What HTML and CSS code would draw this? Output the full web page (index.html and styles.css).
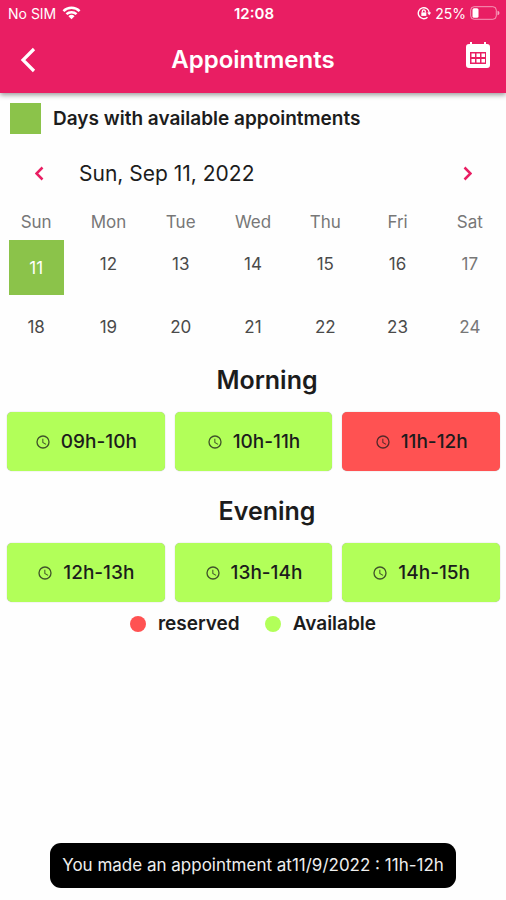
FILE: index.html
```html
<!DOCTYPE html>
<html lang="en">
<head>
<meta charset="utf-8">
<meta name="viewport" content="width=device-width, initial-scale=1">
<title>Appointments</title>
<link rel="stylesheet" href="styles.css">
</head>
<body>
<svg class="sprite" aria-hidden="true">
  <symbol id="clock" viewBox="0 0 24 24"><path fill="currentColor" d="M12 2a10 10 0 1 0 0 20 10 10 0 0 0 0-20zm0 18a8 8 0 1 1 0-16 8 8 0 0 1 0 16zm.5-13H11v6l5.200 3.200.8-1.300-4.500-2.700z"/></symbol>
</svg>
<header class="top">
  <div class="status">
    <div class="status-side">
      <span>No SIM</span>
      <svg class="wifi" viewBox="0 0 20 14" fill="none" stroke="currentColor" stroke-width="2.600"><path d="M1.500 5a12 12 0 0 1 17 0M4.700 8.300a7.500 7.500 0 0 1 10.600 0"/><path d="M10 13.500 6.800 10.300a4.500 4.500 0 0 1 6.400 0z" fill="currentColor" stroke="none"/></svg>
    </div>
    <span class="time">12:08</span>
    <div class="status-side status-end">
      <svg class="lock" viewBox="0 0 14 14" fill="none" stroke="currentColor"><path stroke-width="1.400" d="M10.500 11.300A5.500 5.500 0 1 1 12.300 7"/><path d="M10.200 6.400h4l-2 2.800z" fill="currentColor" stroke="none"/><path d="M4.300 6.400h5v3.500h-5z" fill="currentColor" stroke="none"/><path stroke-width="1.200" d="M5.300 6.500V5.300a1.500 1.500 0 0 1 3 0v1.200"/></svg>
      <span>25%</span>
      <svg class="battery" viewBox="0 0 30 14"><rect x=".7" y=".7" width="25.600" height="12.600" rx="3.500" fill="none" stroke="currentColor" stroke-opacity=".55"/><rect x="2.500" y="2.300" width="6" height="9.400" rx="1.500" fill="currentColor"/><path d="M27.500 4.700q2 .6 2 2.300t-2 2.300z" fill="currentColor" fill-opacity=".6"/></svg>
    </div>
  </div>
  <div class="bar">
    <button class="icon-button" aria-label="Back"><svg class="back" viewBox="0 0 16 26" fill="none" stroke="currentColor" stroke-width="3.200"><path d="M14 2 3 13l11 11"/></svg></button>
    <h1>Appointments</h1>
    <button class="icon-button" aria-label="Open calendar"><svg class="calendar-icon" viewBox="0 0 24 27"><path fill="currentColor" fill-rule="evenodd" d="M3 2h1V0h2v2h12V0h2v2h1a3 3 0 0 1 3 3v18a3 3 0 0 1-3 3H3a3 3 0 0 1-3-3V5a3 3 0 0 1 3-3zm1 8v12h16V10z"/><path fill="currentColor" d="M5.500 11.500h3.500v3.500H5.500zm5 0H14v3.500h-3.500zm5 0H19v3.500h-3.500zm-10 5.500h3.500v3.500H5.500zm5 0H14v3.500h-3.500zm5 0H19v3.500h-3.500z"/></svg></button>
  </div>
</header>
<main>
  <p class="hint"><span class="swatch"></span>Days with available appointments</p>
  <div class="date-nav">
    <button class="arrow" aria-label="Previous"><svg viewBox="0 0 9 15" fill="none" stroke="currentColor" stroke-width="2.500"><path d="M7.500 1.500l-6 6 6 6"/></svg></button>
    <h2 class="date">Sun, Sep 11, 2022</h2>
    <button class="arrow" aria-label="Next"><svg viewBox="0 0 9 15" fill="none" stroke="currentColor" stroke-width="2.500"><path d="M1.500 1.500l6 6-6 6"/></svg></button>
  </div>
  <table class="calendar">
    <thead><tr><th>Sun</th><th>Mon</th><th>Tue</th><th>Wed</th><th>Thu</th><th>Fri</th><th>Sat</th></tr></thead>
    <tbody>
      <tr><td><button class="day selected">11</button></td><td><button class="day">12</button></td><td><button class="day">13</button></td><td><button class="day">14</button></td><td><button class="day">15</button></td><td><button class="day">16</button></td><td><button class="day muted">17</button></td></tr>
      <tr><td><button class="day">18</button></td><td><button class="day">19</button></td><td><button class="day">20</button></td><td><button class="day">21</button></td><td><button class="day">22</button></td><td><button class="day">23</button></td><td><button class="day muted">24</button></td></tr>
    </tbody>
  </table>
  <section>
    <h2 class="period">Morning</h2>
    <div class="slots">
      <button class="slot"><svg><use href="#clock"/></svg>09h-10h</button>
      <button class="slot"><svg><use href="#clock"/></svg>10h-11h</button>
      <button class="slot reserved"><svg><use href="#clock"/></svg>11h-12h</button>
    </div>
  </section>
  <section>
    <h2 class="period">Evening</h2>
    <div class="slots">
      <button class="slot"><svg><use href="#clock"/></svg>12h-13h</button>
      <button class="slot"><svg><use href="#clock"/></svg>13h-14h</button>
      <button class="slot"><svg><use href="#clock"/></svg>14h-15h</button>
    </div>
  </section>
  <ul class="legend">
    <li><span class="dot dot-reserved"></span>reserved</li>
    <li><span class="dot"></span>Available</li>
  </ul>
</main>
<div class="toast" role="status">You made an appointment at11/9/2022 : 11h-12h</div>
</body>
</html>
```
FILE: styles.css
```css
* {
  box-sizing: border-box;
}

body {
  margin: 0;
  min-height: 100vh;
  display: flex;
  flex-direction: column;
  background: #fefefe;
  color: #1c1c1c;
  font-family: Inter, "Liberation Sans", sans-serif;
}

h1, h2, p, ul {
  margin: 0;
  padding: 0;
}

button {
  font: inherit;
  color: inherit;
  background: none;
  border: 0;
  padding: 0;
}

svg {
  display: block;
  flex: none;
}

.sprite {
  position: absolute;
  width: 0;
  height: 0;
}

.top {
  background: #e91e63;
  color: #fff;
  box-shadow: 0 2px 5px rgba(0, 0, 0, 0.4);
}

.status {
  display: flex;
  align-items: center;
  height: 26px;
  padding: 0 6px 0 8px;
  font-size: 14px;
}

.status-side {
  flex: 1;
  display: flex;
  align-items: center;
  gap: 6px;
}

.status-end {
  justify-content: flex-end;
  gap: 4px;
}

.time {
  font-size: 15px;
  font-weight: 600;
}

.wifi {
  width: 19px;
  height: 14px;
}

.lock {
  width: 14px;
  height: 14px;
}

.battery {
  width: 30px;
  height: 14px;
}

.bar {
  display: flex;
  align-items: center;
  justify-content: space-between;
  height: 67px;
  padding: 0 16px;
}

.bar h1 {
  font-size: 24px;
  font-weight: 600;
}

.icon-button {
  width: 24px;
  display: flex;
  justify-content: center;
}

.back {
  width: 16px;
  height: 26px;
}

.calendar-icon {
  width: 24px;
  height: 27px;
  margin-bottom: 8px;
}

.hint {
  display: flex;
  align-items: center;
  gap: 12px;
  padding: 10px 10px 0;
  font-size: 19px;
  font-weight: 600;
}

.swatch {
  width: 31px;
  height: 31px;
  background: #8bc34a;
}

.date-nav {
  display: flex;
  align-items: center;
  gap: 24px;
  height: 78px;
  padding: 0 23px;
}

.date {
  flex: 1;
  font-size: 21px;
  font-weight: 400;
}

.arrow {
  width: 32px;
  height: 32px;
  display: flex;
  align-items: center;
  justify-content: center;
  color: #e91e63;
}

.arrow svg {
  width: 9px;
  height: 15px;
}

.calendar {
  width: 100%;
  table-layout: fixed;
  border-collapse: collapse;
  text-align: center;
}

.calendar th {
  height: 28px;
  padding: 0 0 8px;
  line-height: 20px;
  font-size: 17px;
  font-weight: 400;
  color: #777;
}

.calendar td {
  height: 63px;
  padding: 0;
  vertical-align: top;
}

.day {
  width: 55px;
  height: 47px;
  font-size: 17px;
  color: #4a4a4a;
}

.day.muted {
  color: #777;
}

.day.selected {
  height: 55px;
  background: #8bc34a;
  color: #fff;
}

.period {
  padding: 0 0 0 28px;
  line-height: 28px;
  font-size: 25px;
  font-weight: 600;
  text-align: center;
}

.slots {
  display: grid;
  grid-template-columns: repeat(3, 1fr);
  gap: 10px;
  padding: 18px 6px 26px 7px;
}

.slot {
  display: flex;
  align-items: center;
  justify-content: center;
  gap: 10px;
  height: 59px;
  border-radius: 5px;
  background: #b2ff59;
  box-shadow: 0 0 1px rgba(0, 0, 0, 0.4);
  font-size: 19px;
  font-weight: 500;
}

.slot svg {
  width: 16px;
  height: 16px;
  opacity: 0.75;
}

.slot.reserved {
  background: #ff5252;
}

.legend {
  display: flex;
  justify-content: center;
  gap: 25px;
  margin-top: -16px;
  list-style: none;
  line-height: 24px;
  font-size: 19px;
  font-weight: 600;
}

.legend li {
  display: flex;
  align-items: center;
  gap: 12px;
}

.dot {
  width: 16px;
  height: 16px;
  border-radius: 50%;
  background: #b2ff59;
}

.dot-reserved {
  background: #ff5252;
}

.toast {
  margin: auto auto 12px;
  padding: 11px 12px;
  border-radius: 11px;
  background: #000;
  color: #eee;
  line-height: 23px;
  font-size: 17px;
}
```
